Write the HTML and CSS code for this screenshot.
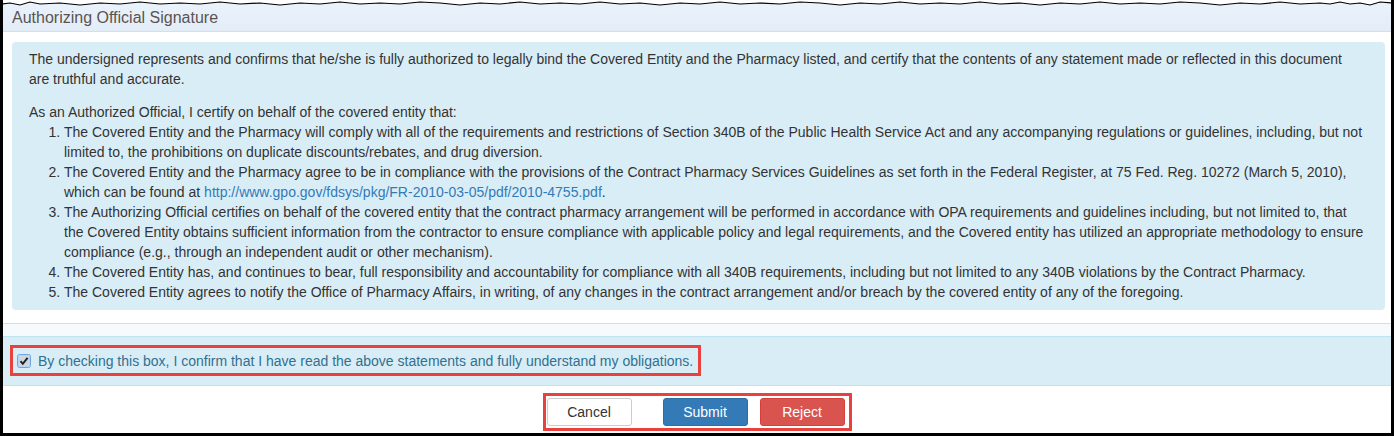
FILE: index.html
```html
<!DOCTYPE html>
<html>
<head>
<meta charset="utf-8">
<link rel="stylesheet" href="styles.css">
</head>
<body>
<div class="frame">
  <div class="panel-heading">Authorizing Official Signature</div>
  <div class="panel-body">
    <div class="notice">
      <p class="intro">The undersigned represents and confirms that he/she is fully authorized to legally bind the Covered Entity and the Pharmacy listed, and certify that the contents of any statement made or reflected in this document are truthful and accurate.</p>
      <p class="lead">As an Authorized Official, I certify on behalf of the covered entity that:</p>
      <ol class="terms">
        <li>The Covered Entity and the Pharmacy will comply with all of the requirements and restrictions of Section 340B of the Public Health Service Act and any accompanying regulations or guidelines, including, but not limited to, the prohibitions on duplicate discounts/rebates, and drug diversion.</li>
        <li>The Covered Entity and the Pharmacy agree to be in compliance with the provisions of the Contract Pharmacy Services Guidelines as set forth in the Federal Register, at 75 Fed. Reg. 10272 (March 5, 2010), which can be found at <a class="link" href="#">http://www.gpo.gov/fdsys/pkg/FR-2010-03-05/pdf/2010-4755.pdf</a>.</li>
        <li>The Authorizing Official certifies on behalf of the covered entity that the contract pharmacy arrangement will be performed in accordance with OPA requirements and guidelines including, but not limited to, that the Covered Entity obtains sufficient information from the contractor to ensure compliance with applicable policy and legal requirements, and the Covered entity has utilized an appropriate methodology to ensure compliance (e.g., through an independent audit or other mechanism).</li>
        <li>The Covered Entity has, and continues to bear, full responsibility and accountability for compliance with all 340B requirements, including but not limited to any 340B violations by the Contract Pharmacy.</li>
        <li>The Covered Entity agrees to notify the Office of Pharmacy Affairs, in writing, of any changes in the contract arrangement and/or breach by the covered entity of any of the foregoing.</li>
      </ol>
    </div>
  </div>
  <div class="divider"></div>
  <div class="confirm-band">
    <label class="confirm highlight">
      <span class="checkbox">
        <svg width="14" height="14" viewBox="0 0 14 14"><rect x="0.5" y="0.5" width="13" height="13" rx="2" fill="#cfd6e0" stroke="#6fa6e6"/><rect x="1.5" y="1.5" width="11" height="11" rx="1" fill="none" stroke="#b9d3f2"/><path d="M3.5 7.2 L5.8 9.8 L10.6 3.8" fill="none" stroke="#222" stroke-width="2"/></svg>
      </span>
      <span class="confirm-text">By checking this box, I confirm that I have read the above statements and fully understand my obligations.</span>
    </label>
  </div>
  <div class="actions">
    <div class="button-group highlight">
      <button class="btn btn-default">Cancel</button>
      <button class="btn btn-primary">Submit</button>
      <button class="btn btn-danger">Reject</button>
    </div>
  </div>
  <svg class="torn" width="1398" height="8" viewBox="0 0 1398 8" preserveAspectRatio="none">
    <polygon fill="#fff" points="0,0 1398,0 1398,3 1392,3 1380,2 1370,5 1360,3 1350,4 1340,2 1330,4 1320,3 1300,4 1280,2 1260,4 1240,3 1220,5 1200,3 1180,2 1160,4 1140,3 1120,4 1100,2 1080,4 1060,3 1040,5 1020,3 1000,4 980,2 960,4 940,3 920,4 900,2 880,4 860,3 840,5 820,3 800,2 780,4 760,3 740,4 720,2 700,4 680,3 660,5 640,3 620,4 600,2 580,4 560,3 540,4 520,2 500,4 480,3 460,5 440,3 420,2 400,4 380,3 360,4 340,2 320,4 300,3 280,5 260,3 240,4 220,2 200,4 180,3 160,4 140,2 120,4 100,3 80,5 60,3 40,4 30,2 20,5 10,3 0,4"/>
    <polyline fill="none" stroke="#000" stroke-width="1.2" points="1392,8 1392,3 1380,2 1370,5 1360,3 1350,4 1340,2 1330,4 1320,3 1300,4 1280,2 1260,4 1240,3 1220,5 1200,3 1180,2 1160,4 1140,3 1120,4 1100,2 1080,4 1060,3 1040,5 1020,3 1000,4 980,2 960,4 940,3 920,4 900,2 880,4 860,3 840,5 820,3 800,2 780,4 760,3 740,4 720,2 700,4 680,3 660,5 640,3 620,4 600,2 580,4 560,3 540,4 520,2 500,4 480,3 460,5 440,3 420,2 400,4 380,3 360,4 340,2 320,4 300,3 280,5 260,3 240,4 220,2 200,4 180,3 160,4 140,2 120,4 100,3 80,5 60,3 40,4 30,2 20,5 10,3 1,4 1,8"/>
  </svg>
</div>
</body>
</html>
```

FILE: styles.css
```css
html, body {
  margin: 0;
  padding: 0;
  background: #fff;
}
body {
  width: 1398px;
  height: 436px;
  overflow: hidden;
  font-family: "Liberation Sans", Arial, sans-serif;
  font-size: 14px;
  color: #333;
}
.frame {
  position: relative;
  width: 1388px;
  height: 433px;
  overflow: hidden;
  border-left: 3px solid #000;
  border-right: 3px solid #000;
  border-bottom: 3px solid #000;
  background: #fff;
}
.panel-heading {
  height: 29px;
  padding: 0 9px;
  box-sizing: border-box;
  margin-top: 3px;
  background: linear-gradient(#eaf2fb, #e3edf8);
  border-bottom: 1px solid #d9dee4;
  font-size: 16px;
  line-height: 29px;
  color: #5a5450;
}
.panel-body {
  padding: 10px 6px 0 9px;
}
.notice {
  background: #d9edf7;
  border-radius: 4px;
  padding: 7px 18px 8px 17px;
  line-height: 20px;
}
.notice p {
  margin: 0;
}
.intro {
  margin-bottom: 13px !important;
  padding-right: 8px;
}
.terms {
  margin: 0;
  padding-left: 35px;
}
.link {
  color: #337ab7;
  text-decoration: none;
}
.divider {
  margin-top: 13px;
  height: 12px;
  border-top: 1px solid #dcdcdc;
  background: #f6fafd;
}
.confirm-band {
  border-top: 1px solid #bfe3ef;
  border-bottom: 1px solid #bfe3ef;
  background: #d9edf7;
  padding: 8px 0 0 7px;
  box-sizing: border-box;
  height: 50px;
}
.highlight {
  border: 3px solid #e8423f;
}
.confirm {
  display: inline-flex;
  align-items: center;
  height: 31px;
  box-sizing: border-box;
  padding: 0 5px 0 4px;
  color: #31708f;
  font-size: 14px;
}
.checkbox {
  display: inline-flex;
  width: 14px;
  height: 14px;
  margin-right: 7px;
  margin-top: 1px;
}
.actions {
  display: flex;
  justify-content: center;
  padding-top: 7px;
}
.button-group {
  display: flex;
  padding: 2px 4px 2px 1px;
}
.btn {
  width: 85px;
  height: 28px;
  border-radius: 3px;
  border: 1px solid transparent;
  font-family: "Liberation Sans", Arial, sans-serif;
  font-size: 14px;
  padding: 0;
  line-height: 26px;
  cursor: pointer;
}
.btn-default {
  background: #fff;
  border-color: #ccc;
  color: #333;
}
.btn-primary {
  background: #337ab7;
  border-color: #2e6da4;
  color: #fff;
  margin-left: 31px;
}
.btn-danger {
  background: #d9534f;
  border-color: #d43f3a;
  color: #fff;
  margin-left: 12px;
}
.torn {
  position: absolute;
  top: 0;
  left: -3px;
}
```
